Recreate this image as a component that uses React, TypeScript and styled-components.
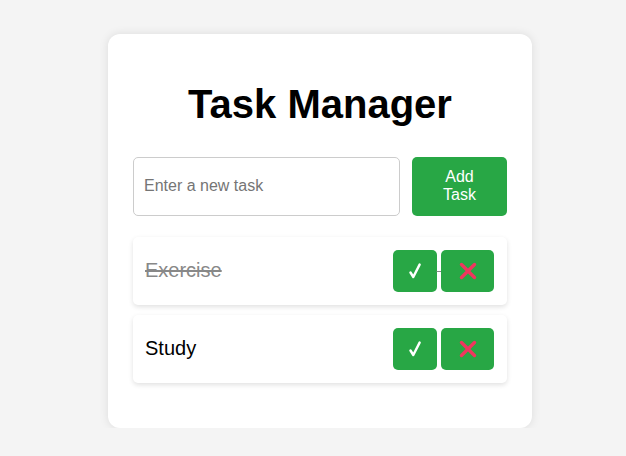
import React from "react";
import styled, { createGlobalStyle } from "styled-components";

const Global = createGlobalStyle`
  html, body { margin: 0; padding: 0; }
  body {
    background: #f4f4f4;
    font-family: Arial, "Liberation Sans", sans-serif;
  }
`;

const Page = styled.div`
  display: flex;
  justify-content: center;
  padding-top: 34px;
  padding-left: 14px;
`;

const Card = styled.div`
  width: 424px;
  box-sizing: border-box;
  background: #fff;
  border-radius: 12px;
  box-shadow: 0 0 10px rgba(0, 0, 0, 0.1);
  padding: 20px 25px 20px 25px;
`;

const Title = styled.h1`
  font-size: 40px;
  font-weight: bold;
  text-align: center;
  margin: 28px 0 30px;
  color: #000;
`;

const Form = styled.div`
  display: flex;
  gap: 12px;
  align-items: stretch;
`;

const Input = styled.input`
  flex: 1;
  min-width: 0;
  border: 1px solid #ccc;
  border-radius: 5px;
  padding: 0 10px;
  font-size: 16px;
  font-family: Arial, "Liberation Sans", sans-serif;
  color: #000;
  outline: none;
  &::placeholder { color: #757575; }
`;

const AddButton = styled.button`
  box-sizing: border-box;
  width: 95px;
  padding: 11px 20px;
  background: #28a745;
  color: #fff;
  border: none;
  border-radius: 5px;
  font-size: 16px;
  line-height: 18.4px;
  font-family: Arial, "Liberation Sans", sans-serif;
  cursor: pointer;
`;

const List = styled.ul`
  list-style: none;
  padding: 0;
  margin: 21px 0 25px;
`;

const Item = styled.li<{ $done?: boolean }>`
  display: flex;
  justify-content: space-between;
  align-items: center;
  background: #fff;
  border-radius: 5px;
  box-shadow: 0 2px 5px rgba(0, 0, 0, 0.12);
  padding: 13px 13px 13px 12px;
  margin-bottom: 10px;
  font-size: 20px;
  color: ${(p) => (p.$done ? "#888" : "#000")};
  text-decoration: ${(p) => (p.$done ? "line-through" : "none")};
`;

const Label = styled.span``;

const Actions = styled.div`
  font-size: 16px;
  white-space: nowrap;
  line-height: 0;
`;

const ActionButton = styled.button<{ $w: number }>`
  display: inline-flex;
  align-items: center;
  justify-content: center;
  vertical-align: middle;
  width: ${(p) => p.$w}px;
  height: 42px;
  padding: 0;
  background: #28a745;
  color: #fff;
  border: none;
  border-radius: 5px;
  cursor: pointer;
`;

const Space = styled.span`
  font-size: 16px;
  line-height: 18px;
  vertical-align: middle;
  font-family: Arial, "Liberation Sans", sans-serif;
`;

const Cross = () => (
  <svg width="18" height="18" viewBox="0 0 18 18">
    <path d="M2.5 2.5 L15.5 15.5 M15.5 2.5 L2.5 15.5" stroke="#f0365e" strokeWidth="3.4" strokeLinecap="round" />
  </svg>
);

const Check = () => (
  <svg width="12" height="16" viewBox="0 0 12 16">
    <path d="M1.5 9.5 L4.3 14 L10.6 1.6" fill="none" stroke="#fff" strokeWidth="2.4" strokeLinecap="round" strokeLinejoin="round" />
  </svg>
);

const tasks = [
  { text: "Exercise", done: true },
  { text: "Study", done: false },
];

export default function App() {
  return (
    <>
      <Global />
      <Page>
        <Card>
          <Title>Task Manager</Title>
          <Form>
            <Input placeholder="Enter a new task" />
            <AddButton>Add Task</AddButton>
          </Form>
          <List>
            {tasks.map((t) => (
              <Item key={t.text} $done={t.done}>
                <Label>{t.text}</Label>
                <Actions>
                  <ActionButton $w={44}><Check /></ActionButton>
                  <Space> </Space>
                  <ActionButton $w={53}><Cross /></ActionButton>
                </Actions>
              </Item>
            ))}
          </List>
        </Card>
      </Page>
    </>
  );
}
